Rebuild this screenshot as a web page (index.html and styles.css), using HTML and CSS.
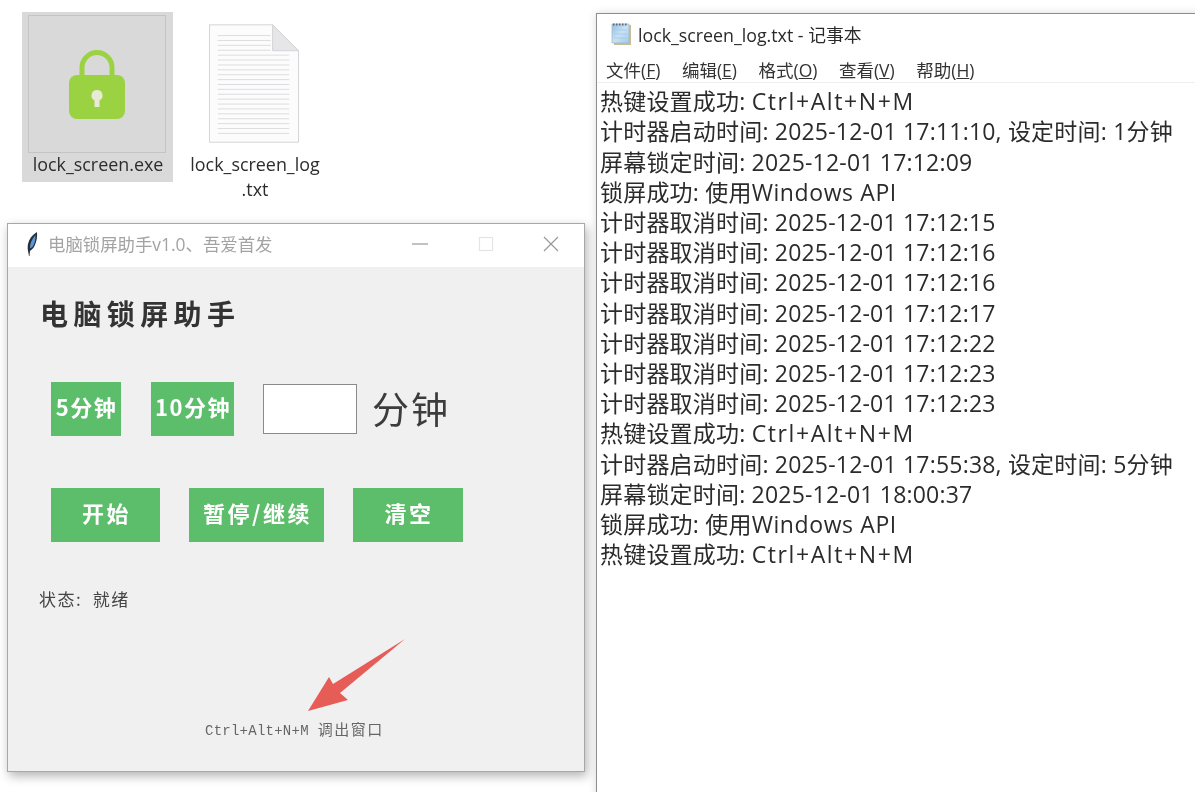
FILE: index.html
```html
<!DOCTYPE html>
<html lang="zh-CN">
<head>
<meta charset="utf-8">
<title>电脑锁屏助手</title>
<link rel="stylesheet" href="styles.css">
</head>
<body>
<div class="desktop">
  <div class="file file-exe">
    <div class="thumb">
      <svg class="lock" viewBox="0 0 58 70" width="58" height="70">
        <path d="M14 30V17.500a15 15 0 0 1 30 0V30" fill="none" stroke="#9bd241" stroke-width="5"/>
        <rect x="1" y="25" width="56" height="44" rx="8" fill="#9bd241"/>
        <path d="M29 40a5.500 5.500 0 0 1 2.500 10.400V57h-5v-6.600A5.500 5.500 0 0 1 29 40z" fill="#e6ead6"/>
      </svg>
    </div>
    <div class="file-name">lock_screen.exe</div>
  </div>
  <div class="file file-txt">
    <svg class="doc" viewBox="0 0 92 122" width="90" height="120">
      <path d="M.5.500H65L91.500 27V120.500H.5z" fill="#fcfcfd" stroke="#d2d4d6"/>
      <path d="M65 .5V27H91.500z" fill="#e6e6e8" stroke="#d2d4d6"/>
      <g stroke="#dcdcde" stroke-width="1">
        <path d="M9 11.500h54M9 16.500h54M9 21.500h54M9 26.500h54M9 31.500h73M9 36.500h73M9 41.500h73M9 46.500h73M9 51.500h73M9 56.500h73M9 61.500h73M9 66.500h73M9 71.500h73M9 76.500h73M9 81.500h73M9 86.500h73M9 91.500h73M9 96.500h73M9 101.500h73M9 106.500h73M9 111.500h73"/>
      </g>
    </svg>
    <div class="file-name">lock_screen_log<br>.txt</div>
  </div>

  <section class="app">
    <header class="titlebar">
      <svg class="feather" viewBox="0 0 14 26" width="14" height="26">
        <path d="M5 25C4.500 21 3 18 4 13 5 8 8 4 13 1 13.500 6 12.500 11 10.500 15 9 18 7 19 6 20L5.500 25z" fill="#26303c"/>
        <path d="M6 17C6 12 8 8 11.500 4 11.500 8 11 12 9 15 8 16.500 7 17 6 17z" fill="#5c98d8"/>
      </svg>
      <span class="app-title">电脑锁屏助手v1.0、吾爱首发</span>
      <div class="winctl">
        <svg width="16" height="16" viewBox="0 0 16 16"><path d="M0 8h16" stroke="#999" stroke-width="1.200"/></svg>
        <svg width="16" height="16" viewBox="0 0 16 16"><rect x="1.500" y="1.500" width="13" height="13" fill="none" stroke="#e4e4e4" stroke-width="1.200"/></svg>
        <svg width="16" height="16" viewBox="0 0 16 16"><path d="M1 1l14 14M15 1L1 15" stroke="#999" stroke-width="1.200"/></svg>
      </div>
    </header>
    <div class="app-body">
      <h1 class="app-heading">电脑锁屏助手</h1>
      <div class="row row-time">
        <button class="btn btn-5">5分钟</button>
        <button class="btn btn-10">10分钟</button>
        <div class="minutes-input"></div>
        <span class="unit">分钟</span>
      </div>
      <div class="row row-actions">
        <button class="btn btn-action">开始</button>
        <button class="btn btn-action btn-pause">暂停/继续</button>
        <button class="btn btn-action btn-clear">清空</button>
      </div>
      <p class="status">状态:&nbsp; 就绪</p>
      <p class="hint"><span class="hint-keys">Ctrl+Alt+N+M</span> 调出窗口</p>
    </div>
    <svg class="arrow" viewBox="0 0 100 76" width="100" height="76">
      <path d="M97 0L25 45 21 38 0 72 40 61 32 54z" fill="#e65c57"/>
    </svg>
  </section>

  <section class="notepad">
    <header class="np-title">
      <svg class="np-icon" viewBox="0 0 24 24" width="24" height="24">
        <defs>
          <linearGradient id="sheet" x1="0" y1="0" x2="1" y2="1">
            <stop offset="0" stop-color="#8fc0e6"/>
            <stop offset=".5" stop-color="#c9e2f4"/>
            <stop offset="1" stop-color="#9fcaea"/>
          </linearGradient>
        </defs>
        <path d="M6 3h17v20H6z" fill="#c9bd98"/>
        <path d="M4 2h17v19H4z" fill="url(#sheet)" stroke="#9db4c6" stroke-width=".7"/>
        <path d="M5 2.500h15" stroke="#667" stroke-width="2" stroke-dasharray="1.500 1.500"/>
        <path d="M6 8h13M6 12h13M6 16h13" stroke="#a9cbe4"/>
      </svg>
      <span>lock_screen_log.txt - 记事本</span>
    </header>
    <nav class="np-menu">
      <span>文件(<u>F</u>)</span><span>编辑(<u>E</u>)</span><span>格式(<u>O</u>)</span><span>查看(<u>V</u>)</span><span>帮助(<u>H</u>)</span>
    </nav>
    <div class="np-text">
      <div>热键设置成功: <span class="keys">Ctrl+Alt+N+M</span></div>
      <div>计时器启动时间: 2025-12-01 17:11:10, 设定时间: 1分钟</div>
      <div>屏幕锁定时间: 2025-12-01 17:12:09</div>
      <div>锁屏成功: 使用<span class="api">Windows API</span></div>
      <div>计时器取消时间: 2025-12-01 17:12:15</div>
      <div>计时器取消时间: 2025-12-01 17:12:16</div>
      <div>计时器取消时间: 2025-12-01 17:12:16</div>
      <div>计时器取消时间: 2025-12-01 17:12:17</div>
      <div>计时器取消时间: 2025-12-01 17:12:22</div>
      <div>计时器取消时间: 2025-12-01 17:12:23</div>
      <div>计时器取消时间: 2025-12-01 17:12:23</div>
      <div>热键设置成功: <span class="keys">Ctrl+Alt+N+M</span></div>
      <div>计时器启动时间: 2025-12-01 17:55:38, 设定时间: 5分钟</div>
      <div>屏幕锁定时间: 2025-12-01 18:00:37</div>
      <div>锁屏成功: 使用<span class="api">Windows API</span></div>
      <div>热键设置成功: <span class="keys">Ctrl+Alt+N+M</span></div>
    </div>
  </section>
</div>
</body>
</html>
```
FILE: styles.css
```css
* { box-sizing: border-box; }
html, body { margin: 0; height: 100%; background: #fff; }
body { overflow: hidden; font-family: "Open Sans", "Noto Sans CJK SC", sans-serif; color: #333; }
.desktop { position: relative; width: 1195px; height: 792px; overflow: hidden; background: #fff; filter: blur(.3px); }

.file { position: absolute; display: flex; flex-direction: column; }
.file-name { font-size: 17.900px; line-height: 25px; text-align: center; color: #2c2c2c; white-space: nowrap; }
.file-exe { left: 22px; top: 12px; width: 151px; height: 170px; background: #d9d9d9; padding: 3px 0 0 6px; }
.thumb { width: 138px; height: 138px; border: 1px solid #c4c4c4; display: flex; justify-content: center; align-items: center; }
.lock { margin-top: 2px; }
.file-exe .file-name { margin: -1px 0 0 -5px; }
.file-txt { left: 170px; top: 24px; width: 170px; align-items: center; }
.doc { margin-right: 2px; }
.file-txt .file-name { margin-top: 8px; }

.app { position: absolute; left: 7px; top: 223px; width: 578px; height: 549px; background: #f0f0f0; border: 1px solid #a8a8a8; box-shadow: 2px 4px 10px rgba(0,0,0,.3); }
.titlebar { height: 43px; background: #fff; display: flex; align-items: center; padding: 0 25px 4px 16px; }
.feather { flex: none; margin-right: 10px; }
.app-title { font-size: 17.400px; color: #a3a3a3; white-space: nowrap; }
.winctl { margin-left: auto; display: flex; gap: 49.500px; }
.app-body { padding: 28px 0 0 33px; }
.app-heading { margin: 0 0 0 -1px; font-size: 28px; line-height: 36px; font-weight: 700; letter-spacing: 5.400px; color: #333; font-family: "Noto Sans CJK SC", sans-serif; }
.row { display: flex; align-items: center; }
.row-time { margin: 51px 0 0 10px; }
.btn { border: 0; padding: 0; background: #5cbd6b; color: #fff; font-weight: 700; font-family: "Noto Sans CJK SC", sans-serif; white-space: nowrap; }
.btn-5 { width: 70px; height: 54px; font-size: 22px; letter-spacing: 1.500px; padding: 0 0 6px 1px; margin-right: 30px; }
.btn-10 { width: 83px; height: 54px; font-size: 22px; letter-spacing: 1.500px; padding: 0 0 6px 1px; margin-right: 29px; }
.minutes-input { width: 94px; height: 50px; background: #fff; border: 1px solid #8a8a8a; margin-right: 15px; }
.unit { font-size: 37px; line-height: 50px; letter-spacing: 2px; color: #3c3c3c; font-family: "Noto Sans CJK SC", sans-serif; margin-bottom: 2px; }
.row-actions { margin: 52px 0 0 10px; gap: 29px; }
.btn-action { width: 109px; height: 54px; font-size: 22px; letter-spacing: 2.500px; padding: 0 0 7px 2px; }
.btn-action.btn-pause { width: 135px; }
.btn-action.btn-clear { width: 110px; }
.status { margin: 46px 0 0 -2px; font-size: 17px; line-height: 22px; letter-spacing: 1.500px; color: #444; font-family: "Noto Sans CJK SC", sans-serif; }
.hint { margin: 109px 0 0 164px; font-size: 15px; line-height: 20px; color: #666; font-family: "Noto Sans CJK SC", sans-serif; letter-spacing: 1.500px; white-space: nowrap; }
.hint-keys { font-family: "Liberation Mono", monospace; letter-spacing: .25px; font-size: 14px; margin-right: 4px; }
.arrow { position: absolute; left: 300px; top: 415px; }

.notepad { position: absolute; left: 596px; top: 13px; width: 620px; height: 800px; background: #fff; border: 1px solid #8e8e8e; box-shadow: 0 0 8px rgba(0,0,0,.15); }
.np-title { height: 39px; display: flex; align-items: center; padding-left: 11px; gap: 6px; font-size: 17.800px; color: #2a2a2a; white-space: nowrap; }
.np-icon { flex: none; }
.np-menu { height: 30px; padding: 4px 0 0 9px; display: flex; gap: 21.500px; align-items: center; font-size: 17.500px; color: #333; border-bottom: 1px solid #eee; white-space: nowrap; }
.np-text { padding: 3.300px 0 0 3px; font-size: 23px; line-height: 30.200px; letter-spacing: .2px; color: #2b2b2b; white-space: nowrap; }
.np-text div { height: 30.200px; }
.keys { letter-spacing: 1.600px; }
.api { letter-spacing: .6px; }
```
